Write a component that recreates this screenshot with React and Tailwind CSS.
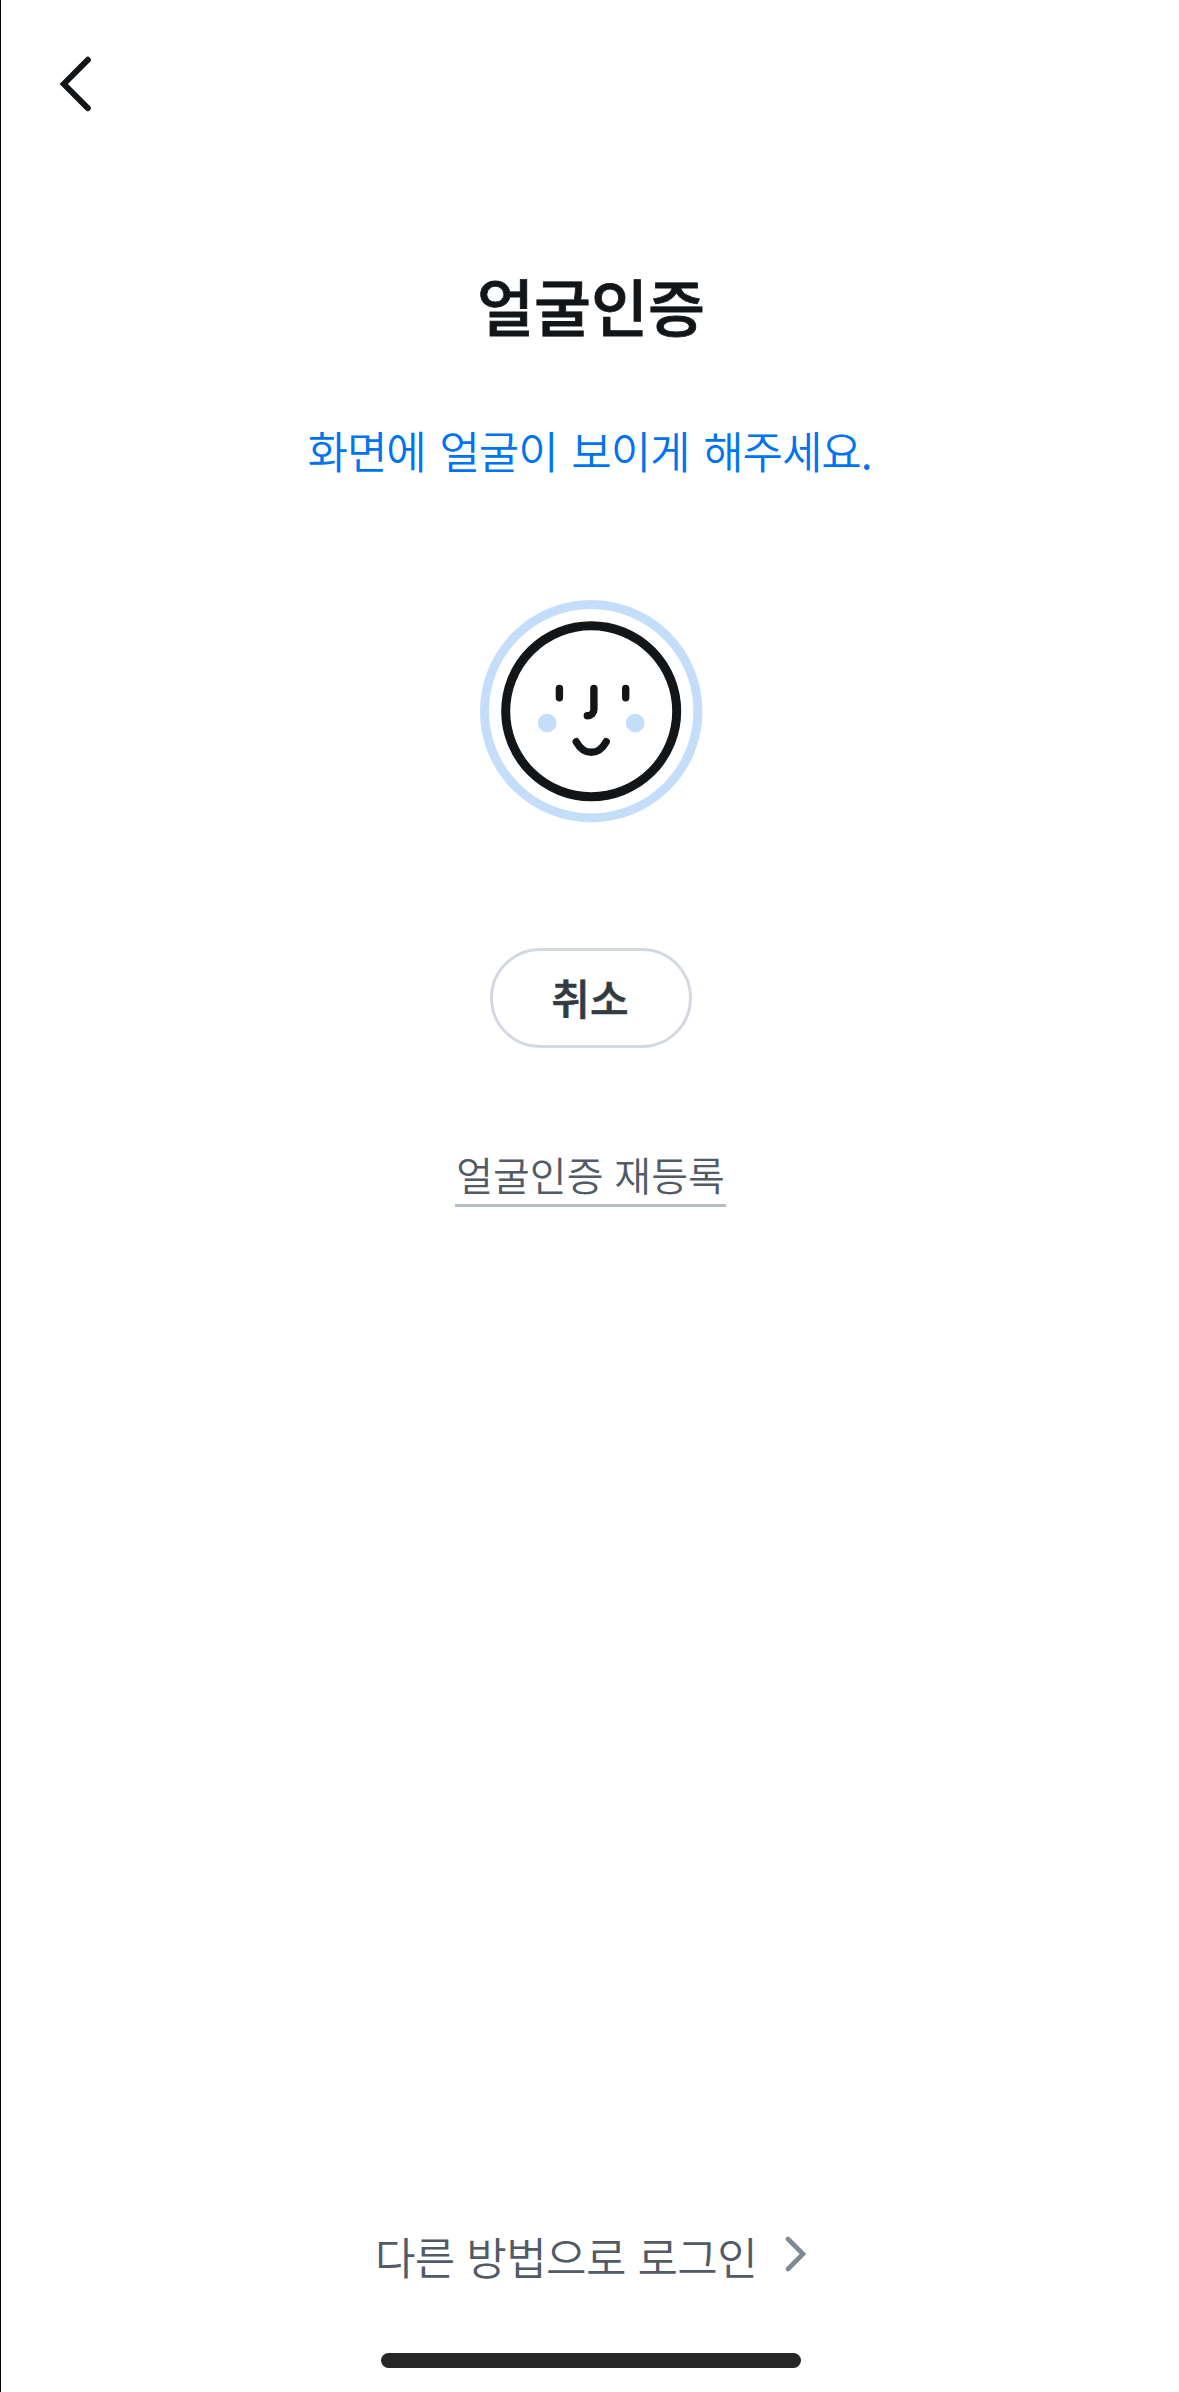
function FaceIcon() {
  return (
    <svg className="mt-[118px] h-[223px] w-[223px] shrink-0" viewBox="0 0 223 223" fill="none" strokeLinecap="round">
      <circle cx="111.2" cy="111.2" r="106.7" stroke="#c4ddfb" strokeWidth="9" />
      <circle cx="111.2" cy="111.2" r="85.5" stroke="#121619" strokeWidth="9" />
      <circle cx="67.2" cy="123" r="9.3" fill="#c4ddfb" />
      <circle cx="155.2" cy="123" r="9.3" fill="#c4ddfb" />
      <g stroke="#121619" strokeWidth="7.4">
        <path d="M79.4 88.4V97.7" />
        <path d="M145.7 88.4V97.7" />
        <path d="M113.9 88.4V109.2C113.9 113 111.2 115.7 107.3 115.7" />
        <path d="M96.2 141.7C104 155.8 118.4 155.8 126.2 141.7" />
      </g>
    </svg>
  );
}

export default function App() {
  return (
    <div className="flex h-[2392px] w-[1179px] flex-col items-center border-l border-black bg-white pl-[2px] font-['Noto_Sans_CJK_KR',sans-serif]">
      <header className="flex h-[168px] w-full items-center pl-[53px]">
        <button aria-label="뒤로">
          <svg className="block h-[60px] w-[40px]" viewBox="0 0 40 60" fill="none" stroke="#121619" strokeWidth="6" strokeLinecap="round">
            <path d="M31.8 5.8L7.8 30L31.8 54.2" />
          </svg>
        </button>
      </header>
      <h1 className="mt-[92px] h-[90px] text-[62px] leading-[90px] font-medium text-[#121619] [-webkit-text-stroke:0.8px_#121619]">얼굴인증</h1>
      <p className="mt-[68px] mr-[3px] h-[64px] text-[44px] leading-[64px] font-[350] tracking-[-1.1px] whitespace-nowrap text-[#0073f0] [word-spacing:5px]">화면에 얼굴이 보이게 해주세요.</p>
      <FaceIcon />
      <button className="mt-[125px] mr-[1px] flex h-[100px] w-[202px] shrink-0 items-center justify-center rounded-full border-[3px] border-[#d3d9e0] pr-[1px] pb-[2px] text-[42px] leading-[60px] font-medium text-[#323a42] [-webkit-text-stroke:0.6px_#323a42]">
        취소
      </button>
      <a className="mt-[96px] mr-[1px] flex h-[63px] items-center border-b-[3px] border-[#b4bdc8] px-[1.5px] text-[40px] leading-[58px] font-[350] whitespace-nowrap text-[#525b65] [word-spacing:2px]">얼굴인증 재등록</a>
      <footer className="mt-auto flex w-full flex-col items-center pb-[24px]">
        <a className="flex h-[64px] items-center gap-[28px] text-[44px] leading-[64px] font-[350] tracking-[-0.6px] whitespace-nowrap text-[#525b65] [word-spacing:2.4px]">
          <span className="mb-[2px]">다른 방법으로 로그인</span>
          <svg className="mb-[6px] h-[36px] w-[22px]" viewBox="0 0 22 36" fill="none" stroke="#7f8995" strokeWidth="4.6" strokeLinecap="round">
            <path d="M3 3L18 18L3 33" />
          </svg>
        </a>
        <div className="mt-[64px] h-[15px] w-[420px] rounded-full bg-[#272727]" />
      </footer>
    </div>
  );
}
